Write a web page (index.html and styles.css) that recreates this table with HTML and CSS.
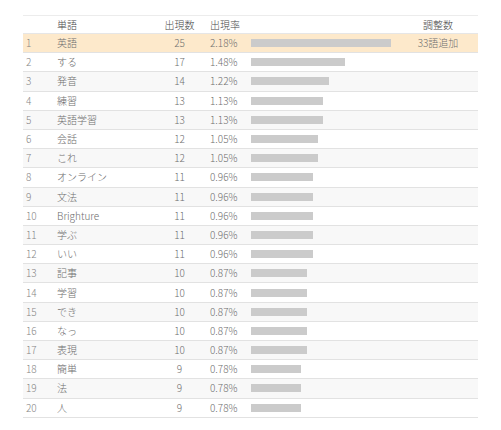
FILE: index.html
```html
<!DOCTYPE html>
<html lang="ja">
<head>
<meta charset="utf-8">
<link rel="stylesheet" href="styles.css">
</head>
<body>
<div class="tbl">
  <div class="row head">
    <div class="c idx"></div>
    <div class="c word">単語</div>
    <div class="c cnt">出現数</div>
    <div class="c rate">出現率</div>
    <div class="c bar"></div>
    <div class="c adj">調整数</div>
  </div>
  <div class="row hl"><div class="c idx">1</div><div class="c word">英語</div><div class="c cnt">25</div><div class="c rate">2.18%</div><div class="c bar"><span class="b" style="width:140px"></span></div><div class="c adj">33語追加</div></div>
  <div class="row"><div class="c idx">2</div><div class="c word">する</div><div class="c cnt">17</div><div class="c rate">1.48%</div><div class="c bar"><span class="b" style="width:94px"></span></div><div class="c adj"></div></div>
  <div class="row alt"><div class="c idx">3</div><div class="c word">発音</div><div class="c cnt">14</div><div class="c rate">1.22%</div><div class="c bar"><span class="b" style="width:78px"></span></div><div class="c adj"></div></div>
  <div class="row"><div class="c idx">4</div><div class="c word">練習</div><div class="c cnt">13</div><div class="c rate">1.13%</div><div class="c bar"><span class="b" style="width:72px"></span></div><div class="c adj"></div></div>
  <div class="row alt"><div class="c idx">5</div><div class="c word">英語学習</div><div class="c cnt">13</div><div class="c rate">1.13%</div><div class="c bar"><span class="b" style="width:72px"></span></div><div class="c adj"></div></div>
  <div class="row"><div class="c idx">6</div><div class="c word">会話</div><div class="c cnt">12</div><div class="c rate">1.05%</div><div class="c bar"><span class="b" style="width:67px"></span></div><div class="c adj"></div></div>
  <div class="row alt"><div class="c idx">7</div><div class="c word">これ</div><div class="c cnt">12</div><div class="c rate">1.05%</div><div class="c bar"><span class="b" style="width:67px"></span></div><div class="c adj"></div></div>
  <div class="row"><div class="c idx">8</div><div class="c word">オンライン</div><div class="c cnt">11</div><div class="c rate">0.96%</div><div class="c bar"><span class="b" style="width:62px"></span></div><div class="c adj"></div></div>
  <div class="row alt"><div class="c idx">9</div><div class="c word">文法</div><div class="c cnt">11</div><div class="c rate">0.96%</div><div class="c bar"><span class="b" style="width:62px"></span></div><div class="c adj"></div></div>
  <div class="row"><div class="c idx">10</div><div class="c word">Brighture</div><div class="c cnt">11</div><div class="c rate">0.96%</div><div class="c bar"><span class="b" style="width:62px"></span></div><div class="c adj"></div></div>
  <div class="row alt"><div class="c idx">11</div><div class="c word">学ぶ</div><div class="c cnt">11</div><div class="c rate">0.96%</div><div class="c bar"><span class="b" style="width:62px"></span></div><div class="c adj"></div></div>
  <div class="row"><div class="c idx">12</div><div class="c word">いい</div><div class="c cnt">11</div><div class="c rate">0.96%</div><div class="c bar"><span class="b" style="width:62px"></span></div><div class="c adj"></div></div>
  <div class="row alt"><div class="c idx">13</div><div class="c word">記事</div><div class="c cnt">10</div><div class="c rate">0.87%</div><div class="c bar"><span class="b" style="width:56px"></span></div><div class="c adj"></div></div>
  <div class="row"><div class="c idx">14</div><div class="c word">学習</div><div class="c cnt">10</div><div class="c rate">0.87%</div><div class="c bar"><span class="b" style="width:56px"></span></div><div class="c adj"></div></div>
  <div class="row alt"><div class="c idx">15</div><div class="c word">でき</div><div class="c cnt">10</div><div class="c rate">0.87%</div><div class="c bar"><span class="b" style="width:56px"></span></div><div class="c adj"></div></div>
  <div class="row"><div class="c idx">16</div><div class="c word">なっ</div><div class="c cnt">10</div><div class="c rate">0.87%</div><div class="c bar"><span class="b" style="width:56px"></span></div><div class="c adj"></div></div>
  <div class="row alt"><div class="c idx">17</div><div class="c word">表現</div><div class="c cnt">10</div><div class="c rate">0.87%</div><div class="c bar"><span class="b" style="width:56px"></span></div><div class="c adj"></div></div>
  <div class="row"><div class="c idx">18</div><div class="c word">簡単</div><div class="c cnt">9</div><div class="c rate">0.78%</div><div class="c bar"><span class="b" style="width:50px"></span></div><div class="c adj"></div></div>
  <div class="row alt"><div class="c idx">19</div><div class="c word">法</div><div class="c cnt">9</div><div class="c rate">0.78%</div><div class="c bar"><span class="b" style="width:50px"></span></div><div class="c adj"></div></div>
  <div class="row"><div class="c idx">20</div><div class="c word">人</div><div class="c cnt">9</div><div class="c rate">0.78%</div><div class="c bar"><span class="b" style="width:50px"></span></div><div class="c adj"></div></div>
</div>
</body>
</html>
```
FILE: styles.css
```css
html, body {
  margin: 0;
  padding: 0;
  background: #ffffff;
}
body {
  padding: 15px 0 0 23px;
  font-family: "Noto Sans CJK JP", "Noto Sans", sans-serif;
  font-size: 10px;
  font-weight: 300;
  color: #6e6e6e;
}
.tbl {
  width: 455px;
  border-top: 1px solid #ececec;
}
.row {
  display: grid;
  grid-template-columns: 30px 102px 49px 43px 151px 80px;
  height: 19.2px;
  box-sizing: border-box;
  border-bottom: 1px solid #e2e2e2;
  align-items: center;
}
.row.head {
  height: 18px;
  color: #474747;
  border-bottom: 1px solid #e6e6e6;
}
.row.alt { background: #f8f8f8; }
.row.hl { background: #fde9cb; }
.c {
  white-space: nowrap;
  line-height: 12px;
}
.idx { padding-left: 3px; color: #858585; }
.word { padding-left: 4px; }
.cnt { text-align: center; }
.rate { padding-left: 6px; }
.bar { padding-left: 4px; display: flex; align-items: center; }
.b {
  display: block;
  height: 8px;
  background: #cbcbcb;
}
.adj { text-align: center; }
```
